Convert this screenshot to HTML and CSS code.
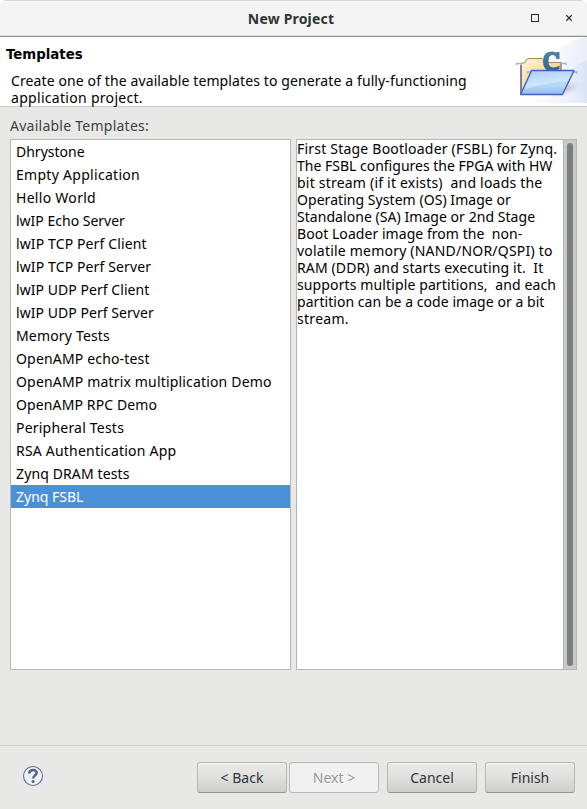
FILE: index.html
```html
<!DOCTYPE html>
<html lang="en">
<head>
<meta charset="utf-8">
<title>New Project</title>
<link rel="stylesheet" href="styles.css">
</head>
<body>
<div class="window">
  <header class="titlebar">
    <h1 class="title">New Project</h1>
    <div class="controls">
      <svg width="10" height="10" viewBox="0 0 10 10"><rect x="1.5" y="1.5" width="7" height="7" fill="none" stroke="#2e3436" stroke-width="1.1"/></svg>
      <svg width="10" height="10" viewBox="0 0 10 10"><path d="M2.3 2.3 7.7 7.7M7.7 2.3 2.3 7.7" stroke="#2e3436" stroke-width="1.3"/></svg>
    </div>
  </header>
  <section class="banner">
    <div class="banner-text">
      <h2>Templates</h2>
      <p><span class="l1">Create one of the available templates to generate a fully-functioning</span><span class="l2">application project.</span></p>
    </div>
    <svg class="banner-art" width="80" height="66" viewBox="0 0 80 66">
      <defs>
        <linearGradient id="sky" x1="0" y1="0" x2="1" y2=".3"><stop offset="0" stop-color="#fff"/><stop offset="1" stop-color="#e2e9f8"/></linearGradient>
        <linearGradient id="sky2" x1="0" y1="0" x2="1" y2="0"><stop offset="0" stop-color="#fff" stop-opacity="0"/><stop offset="1" stop-color="#dce4f7"/></linearGradient>
        <linearGradient id="paper" x1="0" y1="0" x2="1" y2="1"><stop offset="0" stop-color="#fff5d5"/><stop offset="1" stop-color="#eac36c"/></linearGradient>
        <linearGradient id="front" x1="0" y1="0" x2="0" y2="1"><stop offset="0" stop-color="#9dc9f7"/><stop offset=".6" stop-color="#b9dafa"/><stop offset="1" stop-color="#8fbcf0"/></linearGradient>
        <linearGradient id="shine" x1="0" y1="0" x2="1" y2="1"><stop offset="0" stop-color="#fff" stop-opacity=".1"/><stop offset="1" stop-color="#fff" stop-opacity=".55"/></linearGradient>
        <linearGradient id="letter" x1="0" y1="0" x2="0" y2="1"><stop offset="0" stop-color="#4c83aa"/><stop offset="1" stop-color="#2e668f"/></linearGradient>
        <radialGradient id="shade"><stop offset="0" stop-color="#9a92ad" stop-opacity=".55"/><stop offset="1" stop-color="#c9c5db" stop-opacity="0"/></radialGradient>
      </defs>
      <path d="M80 0C66 2 58 7 49 16L42 31 62 53 80 60Z" fill="url(#sky)" opacity=".8"/>
      <path d="M6 66V56C40 51 62 32 80 23V66Z" fill="url(#sky2)"/>
      <ellipse cx="58" cy="52" rx="18" ry="7" fill="url(#shade)" transform="rotate(-18 58 52)"/>
      <path d="M9.500 28V26.500H15M54 26.500H59V28" fill="none" stroke="#b1b2b7" stroke-width="1.500"/>
      <path d="M14 57V27.500Q14 26 18 25.500Q19 21.500 22 21.500H35Q37 21.500 37 25.500H54V57Z" fill="url(#paper)" stroke="#a8884f"/>
      <path d="M14 28V56" stroke="#6969ad" stroke-width="1.500"/>
      <path d="M54 27V34" stroke="#8e87b0" stroke-width="1.300"/>
      <path d="M49.500 15H52.500V22H49.700Q48.500 18 45.500 18Q41.500 18 41.500 24Q41.500 30.500 46 30.500Q49.500 30.500 52.500 28.500V32Q49.500 34 45 34Q36 34 36 24.500Q36 14.500 44.500 14.500Q47.500 14.500 48.800 15.500Z" fill="url(#letter)"/>
      <path d="M20.500 36.500V35H26M65 35H69.500V37" fill="none" stroke="#b1b2b7" stroke-width="1.500"/>
      <path d="M24.500 33.500H67L55.500 57.500H13.500Z" fill="url(#front)" stroke="#4262bb" stroke-width="1.400" stroke-linejoin="round"/>
      <path d="M25.500 34.500H65.500L61 44Q42 45 18 52Z" fill="url(#shine)"/>
    </svg>
  </section>
  <main class="content">
    <div class="label">Available Templates:</div>
    <div class="panes">
      <ul class="list">
        <li>Dhrystone</li>
        <li class="wider">Empty Application</li>
        <li class="wider">Hello World</li>
        <li>lwIP Echo Server</li>
        <li class="slight">lwIP TCP Perf Client</li>
        <li class="slight">lwIP TCP Perf Server</li>
        <li class="tiny">lwIP UDP Perf Client</li>
        <li class="tiny">lwIP UDP Perf Server</li>
        <li class="medium">Memory Tests</li>
        <li class="medium">OpenAMP echo-test</li>
        <li class="medium">OpenAMP matrix multiplication Demo</li>
        <li class="slight">OpenAMP RPC Demo</li>
        <li class="wide">Peripheral Tests</li>
        <li class="wide">RSA Authentication App</li>
        <li class="slight">Zynq DRAM tests</li>
        <li class="selected">Zynq FSBL</li>
      </ul>
      <div class="details">
        <div class="details-text">
          <div class="wide">First Stage Bootloader (FSBL) for Zynq.</div>
          <div>The FSBL configures the FPGA with HW</div>
          <div class="wide">bit stream (if it exists)  and loads the</div>
          <div class="tiny">Operating System (OS) Image or</div>
          <div class="tiny">Standalone (SA) Image or 2nd Stage</div>
          <div class="tiny">Boot Loader image from the  non-</div>
          <div class="wide">volatile memory (NAND/NOR/QSPI) to</div>
          <div class="slight">RAM (DDR) and starts executing it.  It</div>
          <div class="slight">supports multiple partitions,  and each</div>
          <div class="tiny">partition can be a code image or a bit</div>
          <div class="wider">stream.</div>
        </div>
        <div class="scrollbar"><div class="thumb"></div></div>
      </div>
    </div>
  </main>
  <footer class="footer">
    <svg class="help" width="22" height="22" viewBox="0 0 22 22">
      <circle cx="11" cy="11" r="9.500" fill="#f1f2f6" stroke="#5d6e99" stroke-width="1.100"/>
      <path d="M7.300 8.600C7.300 4 14.700 4 14.700 7.800C14.700 10.300 11.200 10.500 11.200 13.400" fill="none" stroke="#50628c" stroke-width="2.500"/>
      <circle cx="11.100" cy="16.500" r="1.500" fill="#50628c"/>
    </svg>
    <div class="buttons">
      <button class="back">&lt; Back</button>
      <button class="next" disabled>Next &gt;</button>
      <button class="cancel">Cancel</button>
      <button class="finish">Finish</button>
    </div>
  </footer>
</div>
</body>
</html>
```
FILE: styles.css
```css
* { box-sizing: border-box; }
body { margin: 0; background: #fff; font: 14px/17px "Noto Sans", sans-serif; color: #000; }
h1, h2, p, ul { margin: 0; padding: 0; }
.window { width: 587px; height: 809px; display: flex; flex-direction: column; background: #e8e8e6; border-radius: 7px 7px 0 0; overflow: hidden; }
.titlebar { height: 37px; flex: none; display: grid; grid-template-columns: 80px 1fr 85px; align-items: center; background: #f4f4f4; border-bottom: 1px solid #8f918c; box-shadow: inset 0 1px #d9d9d7, inset 0 -1px #dededb; }
.title { grid-column: 2; text-align: center; font-size: 14px; line-height: 17px; font-weight: 700; letter-spacing: .18px; color: #2e3436; }
.controls { display: flex; gap: 24px; padding-left: 28px; }
.controls svg { display: block; }
.banner { height: 70px; flex: none; display: flex; justify-content: space-between; background: #fff; border-bottom: 1px solid #c9c9c7; }
.banner-text { padding: 9px 0 0 6px; white-space: nowrap; }
.banner h2 { font: bold 13.33px/17px "DejaVu Sans", sans-serif; }
.banner p { padding: 9px 0 0 5px; }
.banner p span { display: block; }
.l1 { letter-spacing: .11px; }
.l2 { letter-spacing: .3px; }
.banner-art { flex: none; }
.content { flex: none; height: 639px; padding: 10px 10px 0; border-bottom: 1px solid #cececc; }
.label { height: 22px; color: #3c4143; letter-spacing: .25px; }
.panes { display: grid; grid-template-columns: 281px 281px; gap: 5px; height: 531px; }
.list, .details { background: #fff; border: 1px solid #b6b6b2; list-style: none; white-space: nowrap; }
.list li { height: 23px; padding-left: 5px; line-height: 23px; }
.list .selected { background: #4a90d9; color: #fff; }
.tiny { letter-spacing: .05px; }
.slight { letter-spacing: .12px; }
.medium { letter-spacing: .17px; }
.wide { letter-spacing: .21px; }
.wider { letter-spacing: .29px; }
.details { display: flex; justify-content: space-between; }
.details-text { width: 267px; }
.details-text div { white-space: pre; }
.scrollbar { width: 13px; flex: none; background: #c8c9c8; border-left: 1px solid #b6b6b2; padding: 3px 3px; }
.thumb { width: 6px; height: 523px; border-radius: 3px; background: #7b7f7f; }
.footer { flex: 1; display: flex; justify-content: space-between; align-items: flex-start; padding: 16px 12px 0 22px; }
.help { margin-top: 3px; }
.buttons { display: grid; grid-template-columns: 90px 90px 90px 90px; column-gap: 8px; }
.buttons button { height: 31px; padding: 0; font: inherit; color: #2e3436; border: 1px solid #b5b5b1; border-bottom-color: #969692; border-radius: 3px; background: linear-gradient(#eaeae8, #e1e1df 45%, #cececc); box-shadow: inset 0 1px #f5f5f4; }
.buttons .back { margin: 0 -6px 0 6px; }
.buttons .next { color: #929697; background: #f1f1f1; border-color: #b9b9b5; box-shadow: none; text-shadow: 0 1px #fff; }
```
